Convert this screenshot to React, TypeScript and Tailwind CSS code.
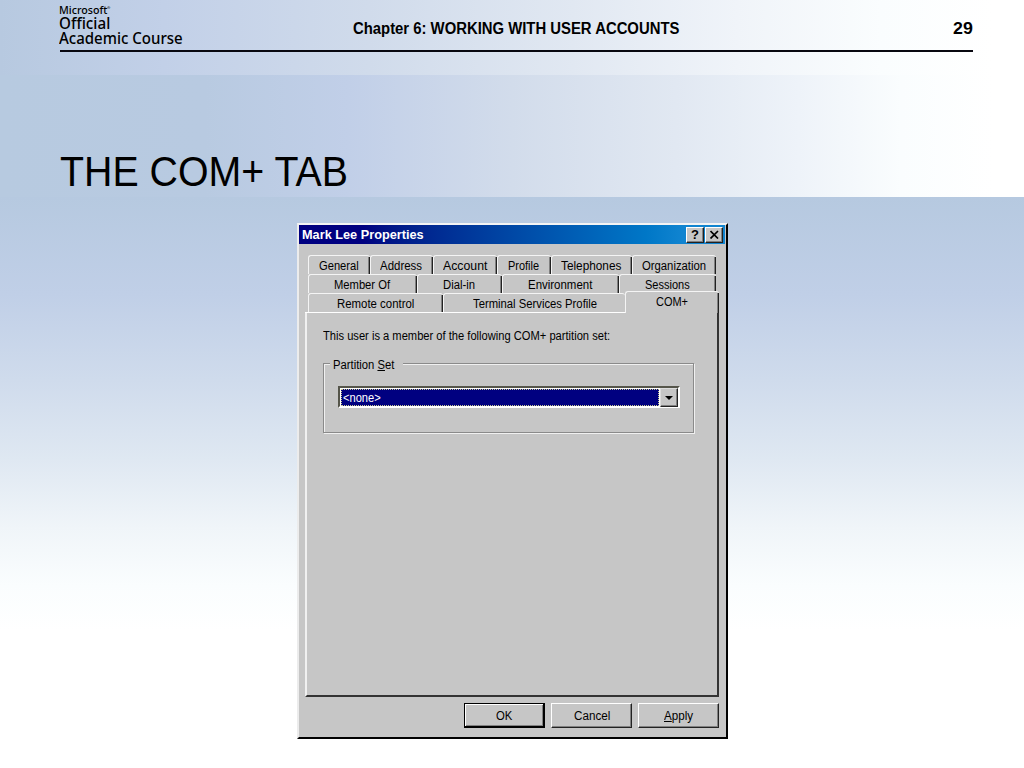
import React, { useLayoutEffect, useRef, useState } from 'react';
import clsx from 'clsx';

interface FitProps {
  w: number;
  className?: string;
  children: React.ReactNode;
}

// Squeezes a run of text horizontally so that it takes exactly w pixels
function Fit({ w, className, children }: FitProps) {
  const ref = useRef<HTMLSpanElement>(null);
  const [scale, setScale] = useState(1);

  useLayoutEffect(() => {
    if (ref.current) setScale(w / ref.current.offsetWidth);
  }, [w]);

  return (
    <span className={clsx('block shrink-0 whitespace-nowrap', className)} style={{ width: w }}>
      <span ref={ref} className="inline-block origin-left" style={{ transform: `scaleX(${scale})` }}>
        {children}
      </span>
    </span>
  );
}

interface TabItem {
  label: string;
  text: number;
  size: string;
}

const firstRow: TabItem[] = [
  { label: 'General', text: 40, size: 'w-[62px]' },
  { label: 'Address', text: 42, size: 'w-[63px]' },
  { label: 'Account', text: 44, size: 'w-[64px]' },
  { label: 'Profile', text: 31, size: 'w-[54px]' },
  { label: 'Telephones', text: 60, size: 'w-[81px]' },
  { label: 'Organization', text: 64, size: 'w-[84px]' },
];

const secondRow: TabItem[] = [
  { label: 'Member Of', text: 56, size: 'w-[109px]' },
  { label: 'Dial-in', text: 32, size: 'w-[85px]' },
  { label: 'Environment', text: 64, size: 'w-[117px]' },
  { label: 'Sessions', text: 45, size: 'w-[97px]' },
];

const thirdRow: TabItem[] = [
  { label: 'Remote control', text: 77, size: 'w-[135px]' },
  { label: 'Terminal Services Profile', text: 124, size: 'w-[182px]' },
];

function Tab({ label, text, size, open }: TabItem & { open?: boolean }) {
  return (
    <div className={clsx('flex h-[19px] rounded-t-[3px] border-t border-l border-[#f4f4f4]', size)}>
      <div className="flex flex-1 items-center justify-center pt-[2px]">
        <Fit w={text}>{label}</Fit>
      </div>
      {!open && <div className="mt-px w-[2px] border-r border-[#222] bg-[#808080]" />}
    </div>
  );
}

function TitleButton({ children }: { children: React.ReactNode }) {
  return (
    <button className="flex h-4 w-[18px] items-center justify-center border border-t-white border-l-white border-r-[#222] border-b-[#222] bg-[#c6c6c6] shadow-[inset_-1px_-1px_0_#808080]">
      {children}
    </button>
  );
}

function DialogButton({ w, primary, children }: { w: number; primary?: boolean; children: React.ReactNode }) {
  return (
    <button
      className={clsx(
        'flex h-[25px] w-[81px] items-center justify-center',
        primary
          ? 'border border-r-2 border-b-2 border-black pt-px shadow-[inset_1px_1px_0_#fff,inset_-1px_-1px_0_#808080]'
          : 'border border-t-white border-l-white border-r-[#222] border-b-[#222] shadow-[inset_-1px_-1px_0_#808080]'
      )}
    >
      <Fit w={w}>{children}</Fit>
    </button>
  );
}

function PropertiesDialog() {
  return (
    <div className="flex h-[516px] w-[431px] flex-col border-t-2 border-r-2 border-b-2 border-l-2 border-t-[#f4f4f4] border-r-black border-b-black border-l-[#ececec] bg-[#c6c6c6] text-[12px] leading-[14px] text-black">
      <div className="mr-px flex h-[19px] items-center justify-between bg-linear-to-r from-[#000080] from-15% to-[#1084d0] to-90% pr-[2px] pl-[3px]">
        <Fit w={122} className="font-bold text-white">Mark Lee Properties</Fit>
        <div className="flex gap-px">
          <TitleButton>
            <span className="text-[13px] font-bold">?</span>
          </TitleButton>
          <TitleButton>
            <svg width="9" height="9" viewBox="0 0 9 9" stroke="#000" strokeWidth="1.7">
              <path d="M0.5 1L8 8.5M8 1L0.5 8.5" />
            </svg>
          </TitleButton>
        </div>
      </div>

      {/* Tab strip, three rows */}
      <div className="mt-[11px] ml-[6px] flex flex-col">
        <div className="ml-[3px] flex">
          {firstRow.map((t) => <Tab key={t.label} {...t} />)}
        </div>
        <div className="ml-[3px] flex">
          {secondRow.map((t) => <Tab key={t.label} {...t} />)}
        </div>
        <div className="flex h-5">
          <div className="flex border-b border-white pl-[3px]">
            {thirdRow.map((t, i) => <Tab key={t.label} {...t} open={i === 1} />)}
          </div>
          <div className="-mt-[2px] flex h-[22px] w-[94px] rounded-t-[3px] border-t border-l border-[#f4f4f4] bg-[#c6c6c6]">
            <div className="flex flex-1 justify-center pt-[3px]">
              <Fit w={32}>COM+</Fit>
            </div>
            <div className="mt-px w-[2px] border-r border-[#222] bg-[#808080]" />
          </div>
        </div>
      </div>

      {/* Active page */}
      <div className="ml-[6px] h-[384px] w-[414px] border-r-2 border-b-2 border-l-2 border-r-[#333] border-b-[#333] border-l-[#f0f0f0] pt-[16px] pl-[16px]">
        <Fit w={287}>This user is a member of the following COM+ partition set:</Fit>

        <div className="mt-[20px] h-[70px] w-[371px] border border-[#8a8a8a] shadow-[1px_1px_0_#f0f0f0,inset_1px_1px_0_#f0f0f0]">
          <div className="-mt-[6px] ml-[6px] w-[73px] bg-[#c6c6c6] pl-[3px]">
            <Fit w={61}>
              Partition <u>S</u>et
            </Fit>
          </div>
          <div className="mt-[14px] ml-[14px] flex h-[22px] w-[342px] border-t-2 border-r-2 border-b-2 border-l-2 border-t-[#55554a] border-r-white border-b-white border-l-[#55554a] bg-white pt-px pl-px">
            <div className="flex flex-1 items-center border border-dotted border-[#c8c890] bg-[#000080] pt-px pl-px text-white">
              <Fit w={38}>&lt;none&gt;</Fit>
            </div>
            <button className="-mt-px ml-px flex h-[19px] w-[18px] items-center justify-center border border-t-[#ddd] border-l-[#ddd] border-r-[#222] border-b-[#222] bg-[#c6c6c6] shadow-[inset_-1px_-1px_0_#808080]">
              <svg width="8" height="4" viewBox="0 0 8 4">
                <path d="M0 0H8L4 4Z" fill="#000" />
              </svg>
            </button>
          </div>
        </div>
      </div>

      <div className="mt-[6px] mr-[7px] flex justify-end gap-[6px]">
        <DialogButton w={16} primary>OK</DialogButton>
        <DialogButton w={36}>Cancel</DialogButton>
        <DialogButton w={29}>
          <u>A</u>pply
        </DialogButton>
      </div>
    </div>
  );
}

export default function App() {
  return (
    <div className="flex h-[768px] w-[1024px] flex-col overflow-hidden bg-white font-['Liberation_Sans',Arial,sans-serif] text-black">
      <div className="h-[75px] bg-[linear-gradient(90deg,#b7c9e0_0%,#c2d0e8_16%,#d0dbeb_36%,#e1e8f2_56%,#f0f4f9_72%,#fafdfe_86%,#fff_97%)]">
        <header className="ml-[60px] flex h-[52px] w-[913px] justify-between border-b-2 border-[#080810]">
          <div className="-ml-px w-[294px] pt-[4px] font-['Noto_Sans','Open_Sans',sans-serif] font-medium">
            <div className="flex h-[12px] text-[10px] leading-[12px]">
              <Fit w={48}>Microsoft</Fit>
              <span className="text-[4px] leading-[8px]">®</span>
            </div>
            <Fit w={51} className="h-[15px] text-[15.5px] leading-[15px]">Official</Fit>
            <Fit w={124} className="text-[15.5px] leading-[15px]">Academic Course</Fit>
          </div>
          <Fit w={326} className="pt-[18px] text-[16px] leading-[21px] font-bold">
            Chapter 6: WORKING WITH USER ACCOUNTS
          </Fit>
          <div className="flex flex-1 justify-end pt-[18px]">
            <Fit w={20} className="text-[16px] leading-[21px] font-bold">29</Fit>
          </div>
        </header>
      </div>

      <div className="h-[122px] bg-[linear-gradient(90deg,#b7cae0_0%,#b8cae1_20%,#c1cfe8_34%,#d2dceb_50%,#e1e8f2_66%,#eef3f9_78%,#fafdfe_88%,#fff_97%)] pt-[70px] pl-[60px]">
        <Fit w={288} className="text-[43px] leading-[52px]">THE COM+ TAB</Fit>
      </div>

      <main className="flex flex-1 justify-center bg-[linear-gradient(180deg,#b6c9e0_0%,#c0cfe7_17%,#cfdbec_32%,#dfe8f2_46%,#f0f5f9_58%,#fafdfe_68%,#fff_76%)] pt-[26px] pl-px">
        <PropertiesDialog />
      </main>
    </div>
  );
}
